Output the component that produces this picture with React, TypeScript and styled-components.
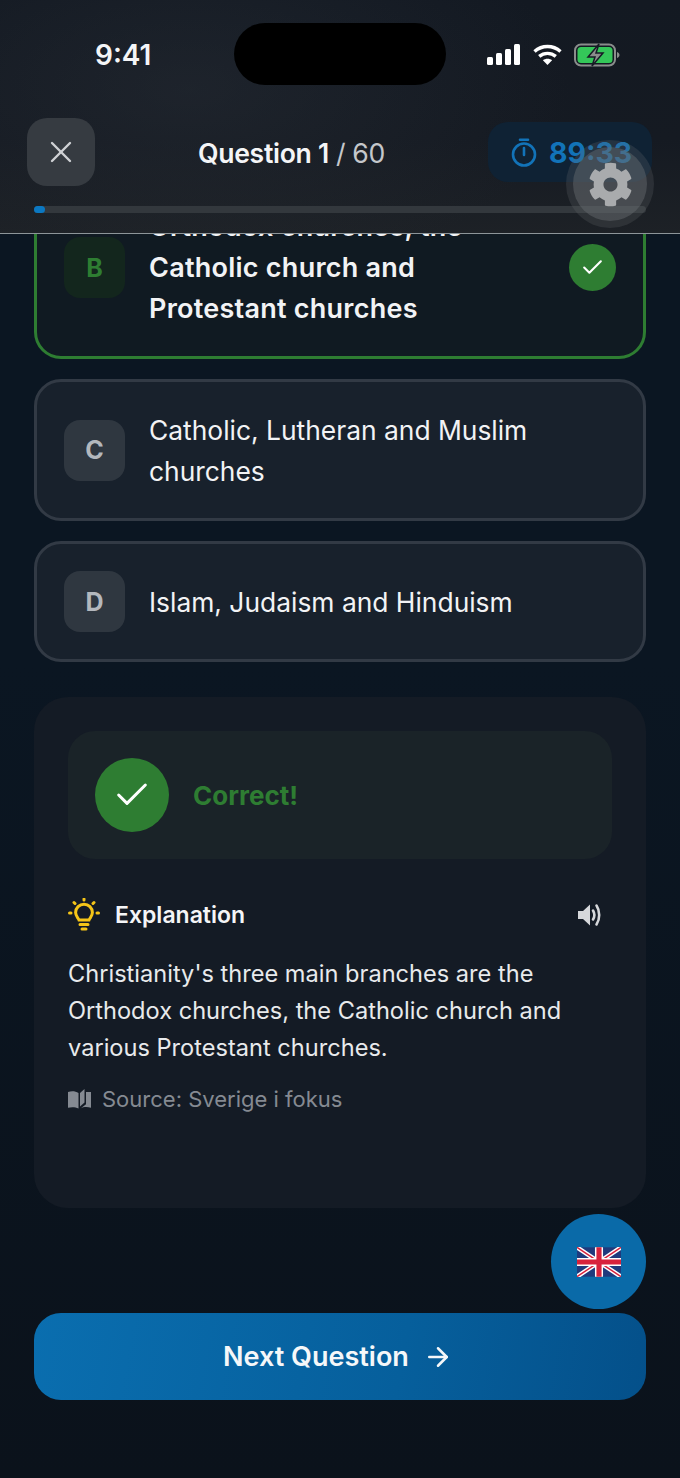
import React, { FC } from 'react'
import styled, { createGlobalStyle } from 'styled-components'
import { FiArrowRight, FiCheck, FiX } from 'react-icons/fi'
import { FaCog } from 'react-icons/fa'

const GlobalStyle = createGlobalStyle`
  html, body {
    margin: 0;
    padding: 0;
    background: #0b1520;
  }
  * {
    box-sizing: border-box;
  }
`

const Screen = styled.div`
  position: relative;
  width: 680px;
  height: 1478px;
  overflow: hidden;
  display: flex;
  flex-direction: column;
  font-family: Inter, "Liberation Sans", sans-serif;
  color: #f4f5f7;
  background: linear-gradient(180deg, #0b1622 0%, #0b1622 45%, #0b121b 100%);
`

const Header = styled.header`
  height: 234px;
  flex: none;
  border-bottom: 1px solid #8d9599;
  background:
    radial-gradient(ellipse 380px 190px at 190px 90px, rgba(44, 50, 58, 0.4), rgba(44, 50, 58, 0) 100%),
    linear-gradient(180deg, #131922 0%, #151a22 60%, #1d2126 100%);
`

const StatusBar = styled.div`
  display: flex;
  align-items: flex-start;
  padding-top: 23px;
  height: 118px;
`

const Time = styled.div`
  width: 234px;
  padding: 15px 0 0 95px;
  font-size: 28px;
  line-height: 34px;
  font-weight: 600;
`

const Island = styled.div`
  width: 212px;
  height: 62px;
  border-radius: 31px;
  background: #000;
`

const StatusIcons = styled.div`
  display: flex;
  align-items: center;
  gap: 12px;
  padding: 20px 0 0 41px;
`

const TopRow = styled.div`
  display: flex;
  align-items: center;
  justify-content: space-between;
  height: 68px;
  padding: 0 28px 0 27px;
`

const CloseButton = styled.div`
  width: 68px;
  height: 68px;
  border-radius: 20px;
  background: #363b41;
  display: flex;
  align-items: center;
  justify-content: center;
  color: #cfd1d4;
  font-size: 36px;
`

const QuestionTitle = styled.div`
  padding-top: 2px;
  font-size: 26.6px;
  font-weight: 600;
  letter-spacing: -0.3px;
`

const QuestionTotal = styled.span`
  font-weight: 400;
  color: #c4c7cb;
  margin-left: 7px;
`

const TimerPill = styled.div`
  width: 164px;
  height: 60px;
  border-radius: 20px;
  background: #0f2234;
  display: flex;
  align-items: center;
  gap: 12px;
  padding-left: 23px;
  color: #1273b8;
  font-size: 28.4px;
  font-weight: 700;
`

const ProgressTrack = styled.div`
  height: 7px;
  margin: 20px 34px 0;
  border-radius: 4px;
  background: #33383d;
`

const ProgressFill = styled.div`
  width: 11px;
  height: 100%;
  border-radius: 4px;
  background: #0b78c2;
`

const GearBubble = styled.div`
  position: absolute;
  left: 566px;
  top: 140px;
  width: 88px;
  height: 88px;
  border-radius: 50%;
  background: rgba(100, 104, 108, 0.25);
  display: flex;
  align-items: center;
  justify-content: center;
`

const GearInner = styled.div`
  width: 74px;
  height: 74px;
  border-radius: 50%;
  background: rgba(105, 108, 112, 0.45);
  display: flex;
  align-items: center;
  justify-content: center;
  color: #a9abad;
  font-size: 45px;
`

const Scroller = styled.main`
  flex: 1;
  min-height: 0;
  overflow: hidden;
  padding: 0 34px;
`

const ScrollInner = styled.div`
  margin-top: -58px;
  display: flex;
  flex-direction: column;
  gap: 20px;
`

const AnswerCard = styled.div<{ $correct?: boolean }>`
  display: flex;
  align-items: center;
  gap: 24px;
  padding: 27px;
  border-radius: 27px;
  border: 3px solid ${p => (p.$correct ? '#2e7d32' : '#323a45')};
  background: ${p => (p.$correct ? '#101a22' : '#18212c')};
`

const LetterBadge = styled.div<{ $correct?: boolean }>`
  width: 61px;
  height: 61px;
  flex: none;
  border-radius: 16px;
  display: flex;
  align-items: center;
  justify-content: center;
  font-size: 25px;
  font-weight: 700;
  background: ${p => (p.$correct ? '#13261d' : '#2f3740')};
  color: ${p => (p.$correct ? '#2e7d32' : '#b4b8bd')};
`

const AnswerText = styled.div<{ $correct?: boolean }>`
  flex: 1;
  font-size: ${p => (p.$correct ? '27px' : '26.4px')};
  line-height: 41px;
  margin: ${p => (p.$correct ? '0' : '1px 0 -1px')};
  font-weight: ${p => (p.$correct ? 600 : 400)};
  letter-spacing: ${p => (p.$correct ? '0.25px' : '0')};
  color: #f2f3f5;
`

const SmallCheck = styled.div`
  width: 47px;
  height: 47px;
  flex: none;
  border-radius: 50%;
  background: #2e7d32;
  display: flex;
  align-items: center;
  justify-content: center;
  color: #fff;
  font-size: 25px;
`

const ExplainPanel = styled.section`
  height: 511px;
  margin-top: 15px;
  padding: 34px;
  border-radius: 34px;
  background: #141b25;
`

const ResultBox = styled.div`
  height: 128px;
  border-radius: 27px;
  background: #1a2328;
  display: flex;
  align-items: center;
  gap: 24px;
  padding-left: 27px;
`

const BigCheck = styled.div`
  width: 74px;
  height: 74px;
  border-radius: 50%;
  background: #2e7d32;
  display: flex;
  align-items: center;
  justify-content: center;
  color: #fff;
  font-size: 40px;
`

const ResultLabel = styled.div`
  font-size: 26px;
  font-weight: 700;
  color: #2e7d32;
`

const ExplainHead = styled.div`
  display: flex;
  align-items: center;
  height: 40px;
  margin-top: 36px;
`

const ExplainTitle = styled.div`
  flex: 1;
  margin-left: 15px;
  font-size: 23px;
  font-weight: 600;
`

const ExplainBody = styled.p`
  margin: 20px 0 0;
  font-size: 23.6px;
  line-height: 37px;
  color: #e8eaec;
`

const SourceLine = styled.div`
  display: flex;
  align-items: center;
  gap: 11px;
  margin-top: 18px;
  font-size: 22px;
  line-height: 30px;
  color: #858a92;
`

const LanguageFab = styled.div`
  position: absolute;
  left: 551px;
  top: 1214px;
  width: 95px;
  height: 95px;
  border-radius: 50%;
  background: #0a6aa8;
  display: flex;
  align-items: center;
  justify-content: center;
`

const Footer = styled.footer`
  flex: none;
  padding: 0 34px 78px;
`

const NextButton = styled.div`
  height: 87px;
  border-radius: 27px;
  background: linear-gradient(100deg, #0a6eaf 0%, #065f9c 60%, #04508a 100%);
  display: flex;
  align-items: center;
  justify-content: center;
  gap: 14px;
  padding-right: 4px;
  font-size: 27px;
  font-weight: 600;
  color: #f5f7f9;
`

const SignalIcon = () => (
  <svg width="34" height="22" viewBox="0 0 34 22" fill="#fff">
    <rect x="0" y="13" width="6" height="8" rx="1.5" />
    <rect x="9" y="9" width="6" height="12" rx="1.5" />
    <rect x="18" y="5" width="6" height="16" rx="1.5" />
    <rect x="27" y="0" width="6" height="21" rx="1.5" />
  </svg>
)

const WifiIcon = () => (
  <svg width="29" height="22" viewBox="0 0 29 22" fill="none" stroke="#fff" strokeWidth="3.4">
    <path d="M1.5 7.5C9 .8 20 .8 27.5 7.5" />
    <path d="M6.2 12.4c4.8-4.1 11.8-4.1 16.6 0" />
    <path d="M14.5 21l-4.6-4.8c2.6-2 6.6-2 9.2 0z" fill="#fff" stroke="none" />
  </svg>
)

const BatteryIcon = () => (
  <svg width="46" height="24" viewBox="0 0 46 24">
    <rect x="1" y="1.5" width="40" height="21" rx="6" fill="none" stroke="#8a8d8c" strokeWidth="2" />
    <rect x="3.5" y="4" width="35" height="16" rx="3.5" fill="#34c759" />
    <path d="M43 9v6c1.6-.5 2.5-1.600 2.5-3S44.6 9.500 43 9z" fill="#8a8d8c" />
    <path d="M25 1l-11 13h7l-3 9 11-13h-7z" fill="#8a8d8c" stroke="#161c25" strokeWidth="1.5" />
  </svg>
)

const StopwatchIcon = () => (
  <svg width="26" height="29" viewBox="0 0 26 29" fill="none" stroke="#1273b8" strokeWidth="2.6" strokeLinecap="round">
    <circle cx="13" cy="16.5" r="11" />
    <path d="M9 1.8h8M13 10v7" />
  </svg>
)

const BulbIcon = () => (
  <svg width="32" height="34" viewBox="0 0 32 34" fill="none" stroke="#f5c518" strokeWidth="3" strokeLinecap="round">
    <path d="M11 22c-.8-2.2-3.400-3.800-3.400-7.400a8.400 8.400 0 0 1 16.800 0c0 3.600-2.600 5.200-3.400 7.400z" />
    <path d="M12 26.500h8M14 31h4" />
    <path d="M16 1v1M6 4.500l1 1M26 4.500l-1 1M1.500 15h1.500M29 15h1.500" />
  </svg>
)

const SpeakerIcon = () => (
  <svg width="26" height="26" viewBox="0 0 26 26" style={{ marginRight: 9 }}>
    <path d="M1 9h5l7-6.500v21L6 17H1z" fill="#d6d8db" />
    <path d="M16 8.500c1.600 2.600 1.600 6.400 0 9" fill="none" stroke="#d6d8db" strokeWidth="2.6" strokeLinecap="round" />
    <path d="M19.500 3.500c3.600 5.400 3.600 13.600 0 19" fill="none" stroke="#d6d8db" strokeWidth="2.6" strokeLinecap="round" />
  </svg>
)

const BookIcon = () => (
  <svg width="23" height="20" viewBox="0 0 23 20" fill="#858a92">
    <path d="M0 3C3.500 1.700 7.500 2 10.500 4V19.500C7.500 18 3.500 17.700 0 18.800z" />
    <path d="M12 4 16.500 0v13.500L12 17.500z" />
    <path d="M18 3h5v15.800c-3.500-1-7.500-1-10.500.7l5.500-4.200z" />
  </svg>
)

const UkFlag = () => (
  <svg width="44" height="30" viewBox="0 0 60 40">
    <rect width="60" height="40" fill="#1f3a7d" />
    <path d="M0 0l60 40M60 0L0 40" stroke="#fff" strokeWidth="6" />
    <path d="M0 0l60 40M60 0L0 40" stroke="#d8223c" strokeWidth="2" />
    <path d="M30 0v40M0 20h60" stroke="#fff" strokeWidth="11" />
    <path d="M30 0v40M0 20h60" stroke="#d8223c" strokeWidth="7" />
  </svg>
)

const App: FC = () => {
  return (
    <Screen>
      <GlobalStyle />
      <Header>
        <StatusBar>
          <Time>9:41</Time>
          <Island />
          <StatusIcons>
            <SignalIcon />
            <WifiIcon />
            <BatteryIcon />
          </StatusIcons>
        </StatusBar>
        <TopRow>
          <CloseButton><FiX strokeWidth={1.6} /></CloseButton>
          <QuestionTitle>Question 1<QuestionTotal>/ 60</QuestionTotal></QuestionTitle>
          <TimerPill><StopwatchIcon />89:33</TimerPill>
        </TopRow>
        <ProgressTrack><ProgressFill /></ProgressTrack>
      </Header>
      <GearBubble><GearInner><FaCog /></GearInner></GearBubble>

      <Scroller>
        <ScrollInner>
          <AnswerCard $correct>
            <LetterBadge $correct>B</LetterBadge>
            <AnswerText $correct>Orthodox churches, the<br />Catholic church and<br />Protestant churches</AnswerText>
            <SmallCheck><FiCheck /></SmallCheck>
          </AnswerCard>
          <AnswerCard>
            <LetterBadge>C</LetterBadge>
            <AnswerText>Catholic, Lutheran and Muslim churches</AnswerText>
          </AnswerCard>
          <AnswerCard>
            <LetterBadge>D</LetterBadge>
            <AnswerText>Islam, Judaism and Hinduism</AnswerText>
          </AnswerCard>
          <ExplainPanel>
            <ResultBox>
              <BigCheck><FiCheck strokeWidth={1.8} /></BigCheck>
              <ResultLabel>Correct!</ResultLabel>
            </ResultBox>
            <ExplainHead>
              <BulbIcon />
              <ExplainTitle>Explanation</ExplainTitle>
              <SpeakerIcon />
            </ExplainHead>
            <ExplainBody>
              Christianity's three main branches are the Orthodox churches, the Catholic church and various Protestant churches.
            </ExplainBody>
            <SourceLine><BookIcon />Source: Sverige i fokus</SourceLine>
          </ExplainPanel>
        </ScrollInner>
      </Scroller>

      <LanguageFab><UkFlag /></LanguageFab>
      <Footer>
        <NextButton>Next Question <FiArrowRight size={30} /></NextButton>
      </Footer>
    </Screen>
  )
}

export default App
